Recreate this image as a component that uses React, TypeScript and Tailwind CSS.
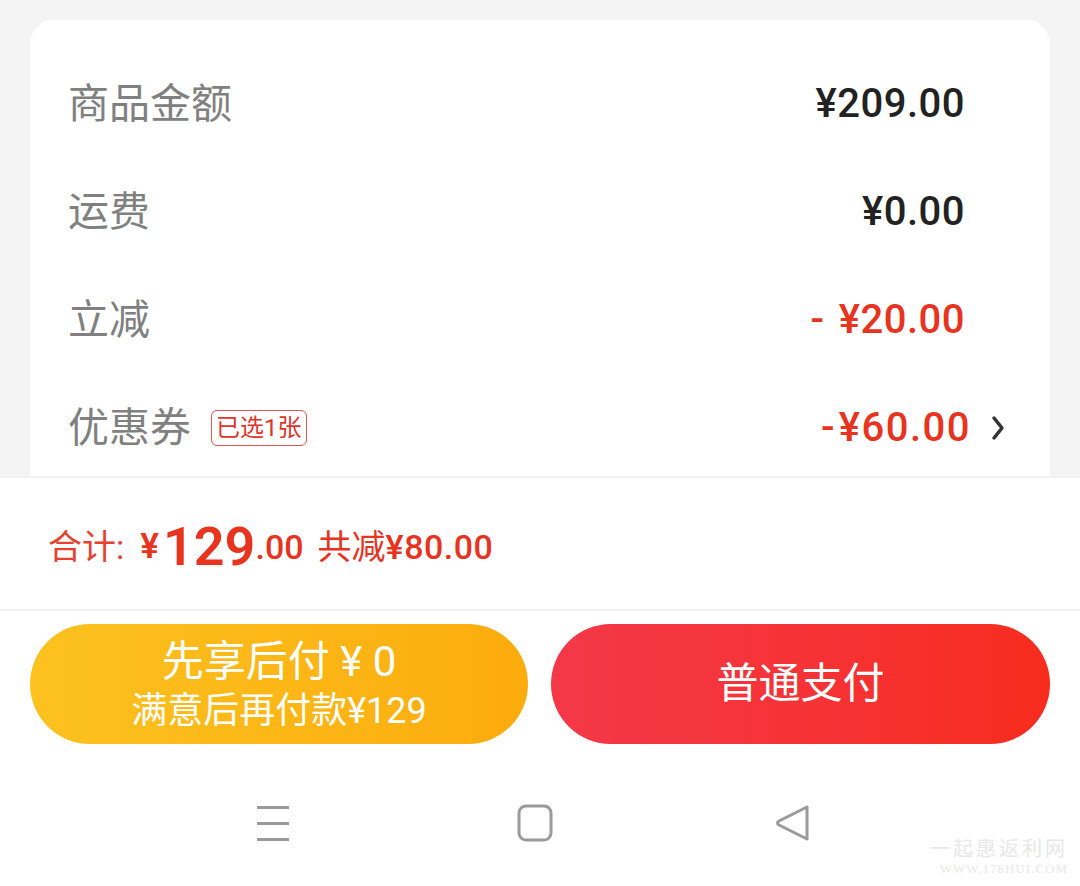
import React from "react";

const cjk = { fontFamily: 'Roboto, "Noto Sans CJK SC", sans-serif' };

function Row({ label, children, extra }: { label: string; children: React.ReactNode; extra?: React.ReactNode }) {
  return (
    <div className="flex h-[108px] items-center justify-between">
      <div className="flex items-center">
        <span className="text-[41px] leading-none text-[#808080]">{label}</span>
        {extra}
      </div>
      {children}
    </div>
  );
}

export default function App() {
  return (
    <div className="relative h-[886px] w-[1080px] overflow-hidden bg-white" style={cjk}>
      <div className="h-[476px] overflow-hidden bg-[#f4f4f4] px-[30px] pt-[20px]">
        <div className="h-[520px] rounded-[24px] bg-white pl-[38px] pr-[85px] pt-[30px]">
          <Row label="商品金额">
            <span className="text-[40px] font-medium leading-none tracking-[0.5px] text-[#222]">¥209.00</span>
          </Row>
          <Row label="运费">
            <span className="text-[40px] font-medium leading-none tracking-[0.5px] text-[#222]">¥0.00</span>
          </Row>
          <Row label="立减">
            <span className="text-[40px] font-medium leading-none tracking-[0.5px] text-[#e8331f]">
              -<span className="ml-[14px]">¥20.00</span>
            </span>
          </Row>
          <div className="-mr-[40px]">
            <Row
              label="优惠券"
              extra={
                <span className="ml-[20px] rounded-[6px] border border-[#e05a4e] px-[4px] py-[2px] text-[24px] leading-[30px] text-[#e0342a]">
                  已选1张
                </span>
              }
            >
              <div className="flex items-center">
                <span className="text-[40px] font-medium leading-none tracking-[1.5px] text-[#e8331f]">
                  <span className="tracking-[4px]">-</span>¥60.00
                </span>
                <svg className="ml-[20px]" width="14" height="26" viewBox="0 0 14 26" fill="none">
                  <path d="M3 3 L11 13 L3 23" stroke="#333" strokeWidth="3.5" strokeLinecap="round" strokeLinejoin="round" />
                </svg>
              </div>
            </Row>
          </div>
        </div>
      </div>
      <div className="h-[2px] bg-[#f1f1f1]" />
      <div className="flex h-[131px] items-center pl-[48px] pt-[6px] text-[#e8331f]">
        <span className="text-[34px] leading-none text-[#e8402f]">合计:</span>
        <span className="ml-[16px] text-[35px] font-semibold leading-none">¥</span>
        <span className="ml-[4px] text-[54px] font-semibold leading-none">129</span>
        <span className="text-[34px] font-medium leading-none">.00</span>
        <span className="ml-[14px] text-[34px] leading-none">共减</span>
        <span className="text-[34px] font-medium leading-none tracking-[0.5px]">¥80.00</span>
      </div>
      <div className="h-[2px] bg-[#f3f3f3]" />
      <div className="flex gap-[23px] px-[30px] pt-[13px]">
        <div className="flex h-[120px] w-[498px] flex-col items-center justify-center rounded-full bg-gradient-to-r from-[#fcc21f] to-[#fcac0c] pt-[2px] text-white">
          <span className="text-[42px] leading-[52px]">先享后付 ¥ 0</span>
          <span className="text-[36px] leading-[46px]">满意后再付款¥129</span>
        </div>
        <div className="flex h-[120px] flex-1 items-center justify-center rounded-full bg-gradient-to-r from-[#f43848] to-[#f72c1c] text-white">
          <span className="text-[42px] leading-none">普通支付</span>
        </div>
      </div>
      <div className="flex h-[123px] items-center pl-[256px] pt-[34px]">
        <svg width="34" height="36" viewBox="0 0 34 36">
          <rect x="1" y="1" width="32" height="3" fill="#9a9a9a" />
          <rect x="1" y="17" width="32" height="3" fill="#9a9a9a" />
          <rect x="1" y="33" width="32" height="3" fill="#9a9a9a" />
        </svg>
        <svg className="ml-[227px]" width="36" height="38" viewBox="0 0 36 38">
          <rect x="2" y="2" width="32" height="34" rx="7" fill="none" stroke="#9a9a9a" strokeWidth="3" />
        </svg>
        <svg className="ml-[222px]" width="36" height="38" viewBox="0 0 36 38">
          <path d="M32 3 L32 35 L4 21 Q1 19 4 17 Z" fill="none" stroke="#9a9a9a" strokeWidth="3" strokeLinejoin="round" />
        </svg>
      </div>
      <div className="absolute bottom-[10px] right-[12px] flex flex-col items-end text-[#e8e8e8]">
        <span className="text-[20px] leading-[24px] tracking-[3px]">一起惠返利网</span>
        <span className="text-[13px] leading-[15px] tracking-[1px]" style={{ fontFamily: '"Liberation Serif", serif' }}>WWW.178HUI.COM</span>
      </div>
    </div>
  );
}
